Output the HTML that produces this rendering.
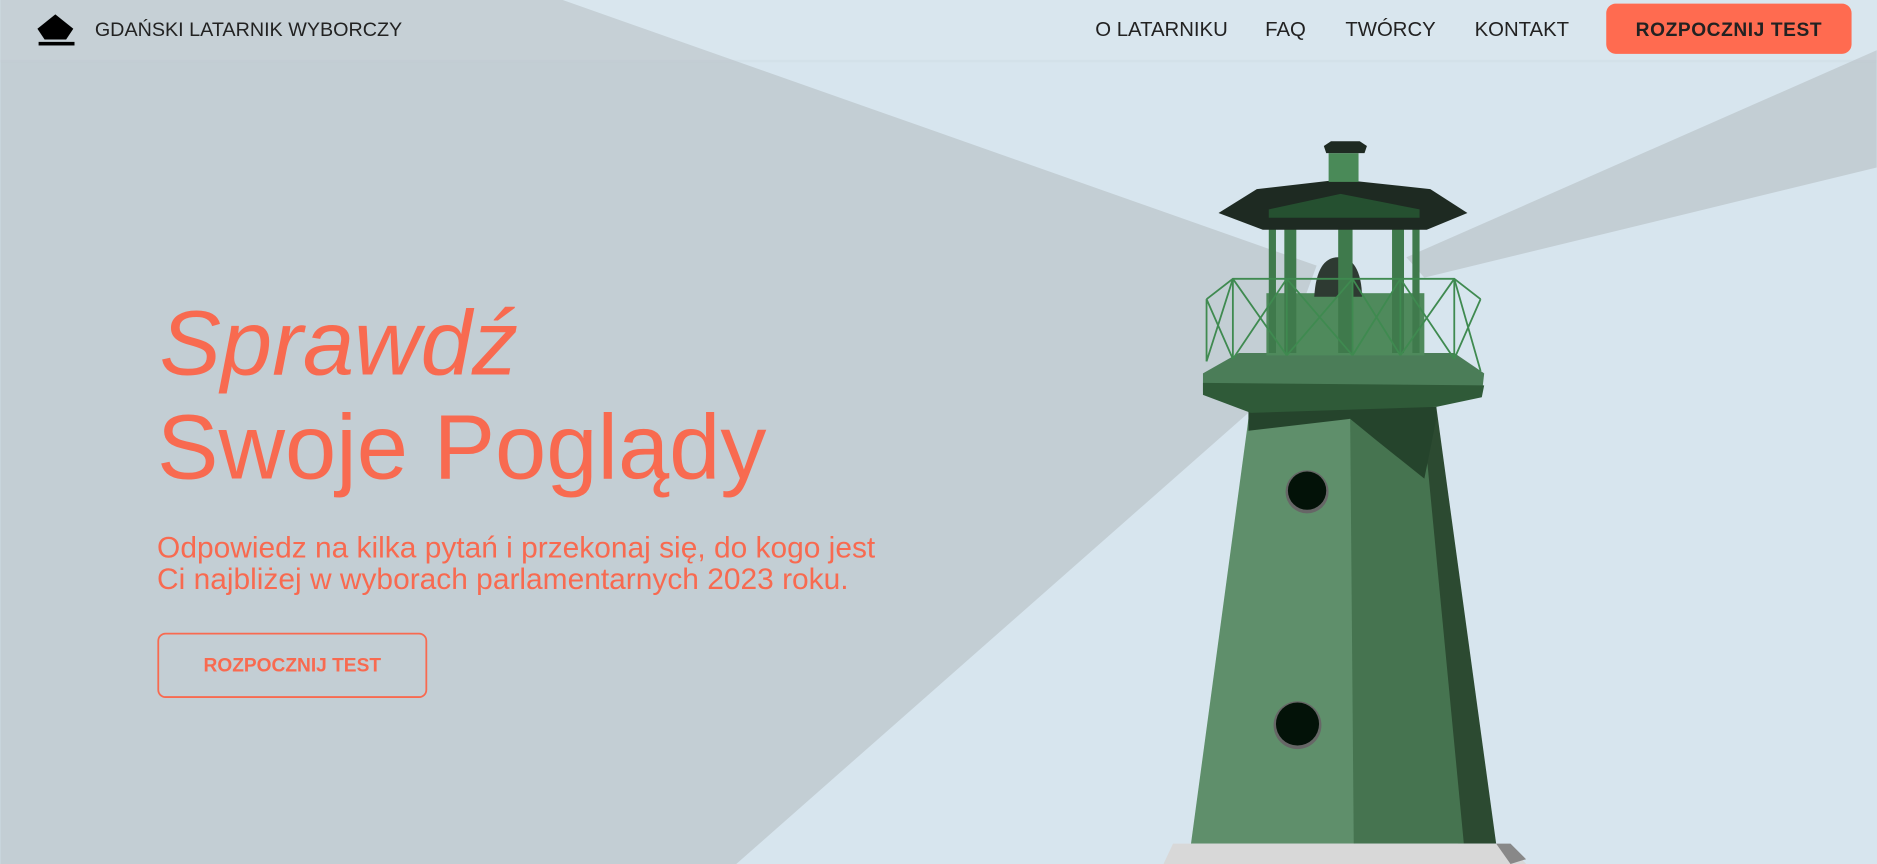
<!DOCTYPE html>
<html><head><meta charset="utf-8"><style>
html,body{margin:0;padding:0;width:1877px;height:864px;overflow:hidden;background:#d7e5ee}
svg{display:block}
text{font-family:"Liberation Sans",Arial,sans-serif}
</style></head><body>
<svg width="1877" height="864" viewBox="0 0 1568 722" xmlns="http://www.w3.org/2000/svg">
<rect width="1568" height="722" fill="#d7e5ee"/>
<!-- beams -->
<polygon points="0,0 470,0 1100,222 1060,330 615,722 0,722" fill="#c3ced4"/>
<polygon points="1175,215 1568,42 1568,140 1190,232" fill="#c3ced4"/>
<!-- header -->
<rect width="1568" height="52" fill="#ffffff" opacity="0.05"/>
<rect y="50" width="1568" height="2" fill="#b0bcc6" opacity="0.12"/>
<polygon points="46,12 61,24 55,33 37,33 31,24" fill="#000"/>
<rect x="32" y="35" width="30" height="3" fill="#000"/>
<text x="79" y="30" font-size="16.5" fill="#222">GDAŃSKI LATARNIK WYBORCZY</text>
<text x="915" y="30" font-size="17" fill="#222">O LATARNIKU</text>
<text x="1057" y="30" font-size="17" fill="#222">FAQ</text>
<text x="1124" y="30" font-size="17" fill="#222">TWÓRCY</text>
<text x="1232" y="30" font-size="17" fill="#222">KONTAKT</text>
<rect x="1342" y="3" width="205" height="42" rx="8" fill="#ff6b50"/>
<text x="1444.5" y="30" font-size="16" font-weight="bold" fill="#222" text-anchor="middle" letter-spacing="0.5">ROZPOCZNIJ TEST</text>
<!-- hero text -->
<text x="133" y="313" font-size="77" font-style="italic" fill="#f86a50">Sprawdź</text>
<text x="131" y="400" font-size="77" fill="#f86a50">Swoje Poglądy</text>
<text x="131" y="466" font-size="25" fill="#f86a50">Odpowiedz na kilka pytań i przekonaj się, do kogo jest</text>
<text x="131" y="492" font-size="25" fill="#f86a50">Ci najbliżej w wyborach parlamentarnych 2023 roku.</text>
<rect x="132" y="529.5" width="224" height="53" rx="6" fill="none" stroke="#f86a50" stroke-width="1.5"/>
<text x="244" y="561" font-size="16" font-weight="bold" fill="#f86a50" text-anchor="middle">ROZPOCZNIJ TEST</text>
<!-- lighthouse tower -->
<polygon points="1186,340 1200,340 1250,705 1218,705" fill="#2c4a31"/>
<polygon points="1043,350 1129,350 1132,705 995,705" fill="#5f8f6b"/>
<polygon points="1128,350 1189,350 1223,705 1131,705" fill="#467450"/>
<polygon points="1043,340 1200,340 1200,350 1190,400 1150,368 1128,350 1043,360" fill="#25442c"/>
<polygon points="980,705 1250,705 1270,716 1275,722 972,722" fill="#d8d8d8"/>
<polygon points="1250,705 1262,705 1275,718 1262,722" fill="#888"/>
<circle cx="1092" cy="411" r="18" fill="#666"/>
<circle cx="1092" cy="410" r="16" fill="#031208"/>
<circle cx="1084" cy="606" r="20" fill="#666"/>
<circle cx="1084" cy="605" r="18" fill="#031208"/>
<!-- gallery platform -->
<polygon points="1005,312 1035,295 1215,295 1240,312 1238,330 1005,327" fill="#4b7d58"/>
<polygon points="1005,320 1240,322 1238,332 1200,340 1045,345 1005,330" fill="#2f5a38"/>
<!-- lantern room -->
<rect x="1058" y="245" width="132" height="52" fill="#4f8a5c"/>
<path d="M1098,248 Q1100,215 1118,215 Q1137,215 1138,248 Z" fill="#2e3a32"/>
<g fill="#3f7a4c">
<rect x="1060" y="175" width="6" height="120"/><rect x="1073" y="170" width="10" height="125"/>
<rect x="1118" y="165" width="12" height="130"/><rect x="1163" y="170" width="10" height="125"/>
<rect x="1180" y="175" width="6" height="120"/>
</g>
<polygon points="1018,178 1050,158 1120,150 1195,158 1226,178 1192,192 1055,192" fill="#1e2a22"/>
<polygon points="1060,175 1120,162 1186,175 1186,182 1060,182" fill="#2a6a3a" opacity="0.6"/>
<rect x="1110" y="128" width="25" height="24" fill="#4a8a58"/>
<polygon points="1106,122 1112,118 1136,118 1142,122 1140,128 1108,128" fill="#1e2a22"/>
<!-- railing -->
<g stroke="#3f8a50" stroke-width="1.5" fill="none">
<polyline points="1008,250 1030,233 1215,233 1237,250"/>
<polyline points="1008,302 1008,250 M1237,250 1237,310"/>
<line x1="1030" y1="233" x2="1030" y2="300"/><line x1="1075" y1="233" x2="1075" y2="297"/>
<line x1="1130" y1="233" x2="1130" y2="297"/><line x1="1170" y1="233" x2="1170" y2="297"/>
<line x1="1215" y1="233" x2="1215" y2="300"/>
<path d="M1008,250 L1030,300 M1030,233 L1008,302 M1030,233 L1075,297 M1075,233 L1030,300 M1075,233 L1130,297 M1130,233 L1075,297 M1130,233 L1170,297 M1170,233 L1130,297 M1170,233 L1215,300 M1215,233 L1170,297 M1215,233 L1237,310 M1237,250 L1215,300"/>
</g>
</svg>
</body></html>
